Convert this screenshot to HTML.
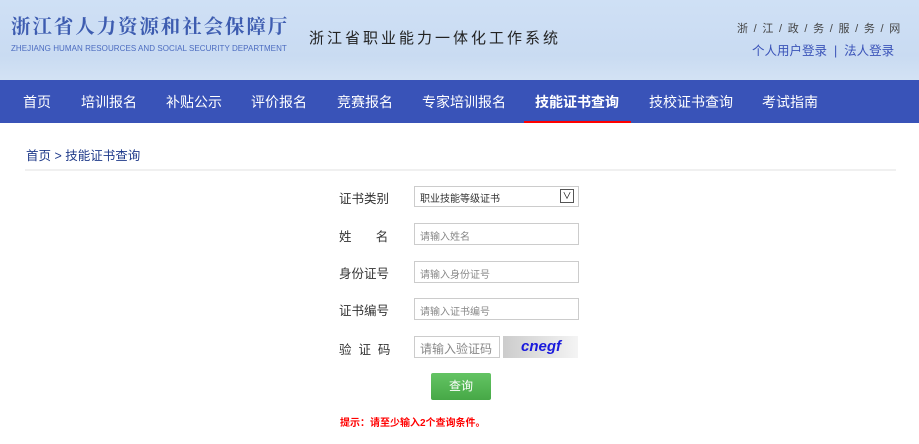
<!DOCTYPE html>
<html><head><meta charset="utf-8"><style>
*{margin:0;padding:0;box-sizing:border-box}
body{width:919px;height:444px;overflow:hidden;background:#fff;font-family:"Liberation Sans","Noto Sans CJK SC",sans-serif;position:relative}
.hd{position:absolute;left:0;top:0;width:919px;height:80px;background:linear-gradient(#cfe0f5,#c9dbf2 70%,#d3e2f4)}
.t1{position:absolute;left:11px;top:11px;font-family:"Noto Serif CJK SC",serif;font-weight:bold;font-size:19.5px;color:#3d5cb0;letter-spacing:1.9px}
.t2{position:absolute;left:11px;top:44px;font-size:8px;color:#4c6cc0;letter-spacing:0.05px;white-space:nowrap}
.t3{position:absolute;left:309px;top:27px;font-size:15px;color:#222;letter-spacing:3px}
.gw{position:absolute;left:737px;top:20px;font-size:11px;color:#444;letter-spacing:1.3px;white-space:nowrap}
.lg{position:absolute;left:752px;top:40px;font-size:12.5px;color:#3a53b8;white-space:nowrap}
.nav{position:absolute;left:0;top:80px;width:919px;height:43px;background:#3953b8}
.nav span{position:absolute;top:12px;font-size:14px;color:#fff;white-space:nowrap}
.nav .on{font-weight:bold}
.ul{position:absolute;left:524px;top:121px;width:107px;height:2px;background:#f00}
.bc{position:absolute;left:26px;top:145px;font-size:12.5px;color:#1f3a8a}
.line{position:absolute;left:25px;top:169px;width:871px;height:2px;background:#f0f0f0}
.lb{position:absolute;left:339px;font-size:12.5px;color:#333;white-space:nowrap}
.in{position:absolute;left:414px;width:165px;height:22px;border:1px solid #ccc;font-size:10px;color:#888;padding:4px 0 0 5px}
.btn{position:absolute;left:431px;top:373px;width:60px;height:27px;background:linear-gradient(#64c464,#46a846);border-radius:2px;color:#fff;font-size:12px;text-align:center;line-height:27px}
.tip{position:absolute;left:340px;top:414px;font-size:10px;color:#f00;font-weight:bold}
</style></head><body>
<div class="hd">
<div class="t1">浙江省人力资源和社会保障厅</div>
<div class="t2">ZHEJIANG HUMAN RESOURCES AND SOCIAL SECURITY DEPARTMENT</div>
<div class="t3">浙江省职业能力一体化工作系统</div>
<div class="gw">浙 / 江 / 政 / 务 / 服 / 务 / 网</div>
<div class="lg">个人用户登录 &nbsp;|&nbsp; 法人登录</div>
</div>
<div class="nav">
<span style="left:23px">首页</span><span style="left:81px">培训报名</span><span style="left:166px">补贴公示</span><span style="left:251px">评价报名</span><span style="left:337px">竞赛报名</span><span style="left:422px">专家培训报名</span><span class="on" style="left:535px">技能证书查询</span><span style="left:649px">技校证书查询</span><span style="left:762px">考试指南</span>
</div>
<div class="ul"></div>
<div class="bc">首页 &gt; 技能证书查询</div>
<div class="line"></div>
<div class="lb" style="top:188px">证书类别</div>
<div class="in" style="top:186px;height:21px;color:#333;padding-top:3px">职业技能等级证书<span style="position:absolute;right:4px;top:2px;width:14px;height:14px;border:1px solid #555;font-size:9px;line-height:12px;text-align:center;color:#000">∨</span></div>
<div class="lb" style="top:226px">姓&nbsp;&nbsp;&nbsp;&nbsp;&nbsp;&nbsp;&nbsp;名</div>
<div class="in" style="top:223px">请输入姓名</div>
<div class="lb" style="top:263px">身份证号</div>
<div class="in" style="top:261px">请输入身份证号</div>
<div class="lb" style="top:300px">证书编号</div>
<div class="in" style="top:298px">请输入证书编号</div>
<div class="lb" style="top:339px">验&nbsp;&nbsp;证&nbsp;&nbsp;码</div>
<div class="in" style="top:336px;width:86px;font-size:12px;padding-top:3px">请输入验证码</div>
<div style="position:absolute;left:503px;top:336px;width:75px;height:22px;background:linear-gradient(90deg,#ccc,#f4f4f4);font:bold 15px 'Liberation Sans',sans-serif;color:#1a1adc;padding-left:18px;line-height:22px;font-style:italic">cnegf</div>
<div class="btn">查询</div>
<div class="tip">提示：请至少输入2个查询条件。</div>
</body></html>
